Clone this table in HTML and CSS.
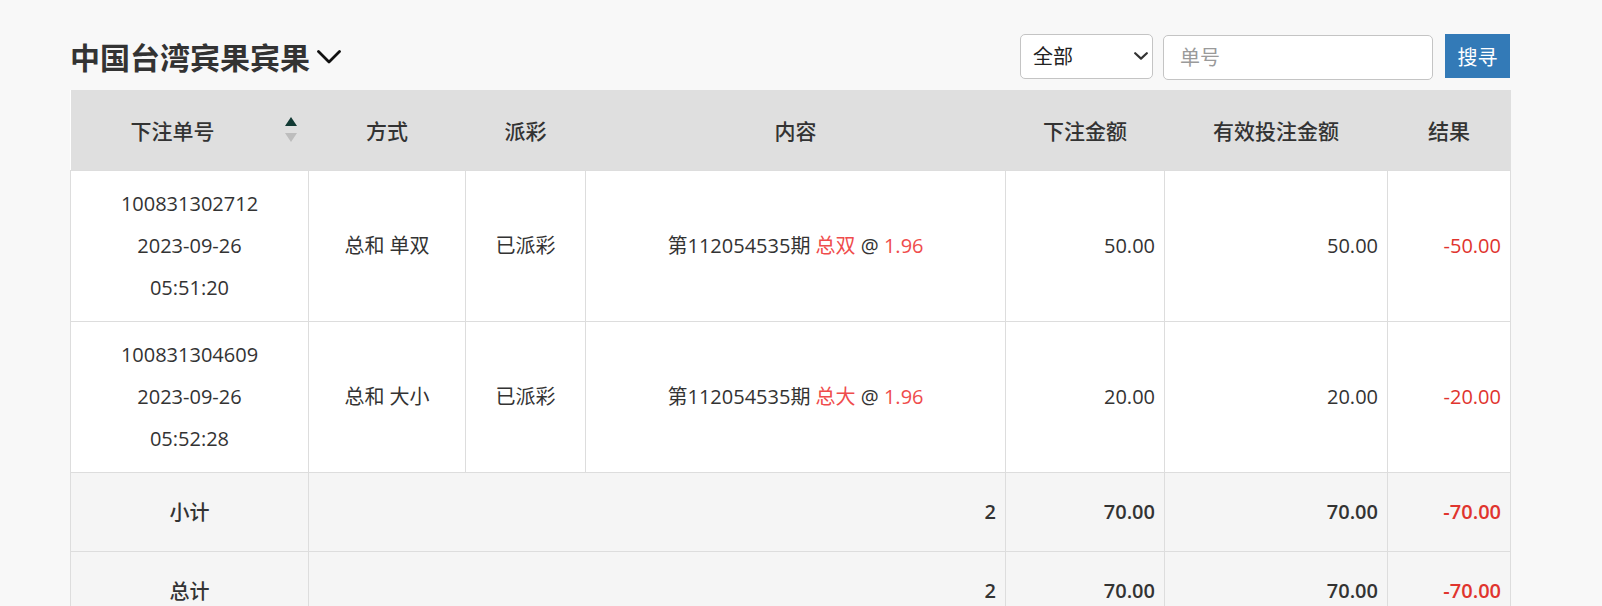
FILE: index.html
```html
<!DOCTYPE html>
<html lang="zh-CN">
<head>
<meta charset="utf-8">
<title>中国台湾宾果宾果</title>
<link rel="stylesheet" href="styles.css">
</head>
<body>
<div class="page">
  <div class="toolbar">
    <h3 class="title">中国台湾宾果宾果<svg class="title-caret" width="24" height="14" viewBox="0 0 24 14"><path d="M1.5 1.5 L12 12 L22.5 1.5" fill="none" stroke="#111" stroke-width="2.8" stroke-linecap="round" stroke-linejoin="round"/></svg></h3>
    <div class="filters">
      <div class="select-wrap">
        <select class="select">
          <option>全部</option>
        </select>
        <svg class="select-caret" width="14" height="8" viewBox="0 0 14 8"><path d="M1.2 1.2 L7 6.6 L12.8 1.2" fill="none" stroke="#333" stroke-width="2.2" stroke-linecap="round" stroke-linejoin="round"/></svg>
      </div>
      <input class="search-input" type="text" placeholder="单号">
      <button class="btn-search">搜寻</button>
    </div>
  </div>

  <table class="bets">
    <colgroup>
      <col class="c-id"><col class="c-way"><col class="c-pay"><col class="c-content"><col class="c-amount"><col class="c-valid"><col class="c-result">
    </colgroup>
    <thead>
      <tr>
        <th class="th-sort">下注单号
          <span class="sort-icon">
            <svg width="12" height="26" viewBox="0 0 12 26"><path d="M6 0 L12 9 L0 9 Z" fill="#123a34"/><path d="M0 16 L12 16 L6 25 Z" fill="#bdbdbd"/></svg>
          </span>
        </th>
        <th>方式</th>
        <th>派彩</th>
        <th>内容</th>
        <th>下注金额</th>
        <th>有效投注金额</th>
        <th>结果</th>
      </tr>
    </thead>
    <tbody>
      <tr class="row">
        <td class="center multi">100831302712<br>2023-09-26<br>05:51:20</td>
        <td class="center">总和 单双</td>
        <td class="center">已派彩</td>
        <td class="center">第112054535期 <span class="hl">总双</span> @ <span class="hl">1.96</span></td>
        <td class="num">50.00</td>
        <td class="num">50.00</td>
        <td class="num neg">-50.00</td>
      </tr>
      <tr class="row">
        <td class="center multi">100831304609<br>2023-09-26<br>05:52:28</td>
        <td class="center">总和 大小</td>
        <td class="center">已派彩</td>
        <td class="center">第112054535期 <span class="hl">总大</span> @ <span class="hl">1.96</span></td>
        <td class="num">20.00</td>
        <td class="num">20.00</td>
        <td class="num neg">-20.00</td>
      </tr>
      <tr class="sum">
        <td class="center">小计</td>
        <td class="num" colspan="3">2</td>
        <td class="num">70.00</td>
        <td class="num">70.00</td>
        <td class="num neg">-70.00</td>
      </tr>
      <tr class="sum">
        <td class="center">总计</td>
        <td class="num" colspan="3">2</td>
        <td class="num">70.00</td>
        <td class="num">70.00</td>
        <td class="num neg">-70.00</td>
      </tr>
    </tbody>
  </table>
</div>
</body>
</html>
```

FILE: styles.css
```css
* {
  box-sizing: border-box;
}

html, body {
  margin: 0;
  padding: 0;
  background: #f8f8f8;
}

body {
  font-family: "Open Sans", "Noto Sans CJK SC", sans-serif;
  font-size: 20px;
  color: #333;
}

.page {
  width: 1440px;
  margin-left: 70px;
  padding-top: 30px;
}

.toolbar {
  display: flex;
  align-items: center;
  justify-content: space-between;
  height: 52px;
  margin-bottom: 8px;
}

.title {
  margin: 0;
  display: flex;
  align-items: center;
  font-family: "Noto Sans CJK SC", sans-serif;
  font-size: 30px;
  font-weight: 700;
  color: #333;
  line-height: 1;
  letter-spacing: 0;
}

.title-caret {
  margin-left: 7px;
  margin-top: 2px;
}

.filters {
  display: flex;
  align-items: center;
}

.select-wrap {
  position: relative;
  width: 133px;
  height: 45px;
  margin-right: 10px;
}

.select {
  appearance: none;
  -webkit-appearance: none;
  width: 100%;
  height: 100%;
  border: 1px solid #c4c4c4;
  border-radius: 5px;
  background: #fff;
  padding: 0 30px 0 12px;
  font-family: "Open Sans", "Noto Sans CJK SC", sans-serif;
  font-size: 20px;
  color: #222;
}

.select-caret {
  position: absolute;
  right: 5px;
  top: 18px;
  pointer-events: none;
}

.search-input {
  width: 270px;
  height: 45px;
  margin-top: 2px;
  border: 1px solid #c4c4c4;
  border-radius: 5px;
  background: #fff;
  padding: 0 16px;
  font-family: "Open Sans", "Noto Sans CJK SC", sans-serif;
  font-size: 20px;
  color: #333;
}

.search-input::placeholder {
  color: #9a9a9a;
}

.btn-search {
  width: 65px;
  height: 44px;
  margin-left: 12px;
  border: none;
  border-radius: 0;
  background: #337ab7;
  color: #fff;
  font-family: "Noto Sans CJK SC", sans-serif;
  font-size: 20px;
  padding: 0;
}

.bets {
  width: 1440px;
  table-layout: fixed;
  border-collapse: collapse;
  background: #fff;
}

.c-id { width: 238px; }
.c-way { width: 157px; }
.c-pay { width: 120px; }
.c-content { width: 420px; }
.c-amount { width: 159px; }
.c-valid { width: 223px; }
.c-result { width: 123px; }

.bets thead tr {
  height: 80px;
  background: #dfdfdf;
}

.bets th {
  font-family: "Noto Sans CJK SC", sans-serif;
  font-weight: 500;
  font-size: 21px;
  color: #333;
  text-align: center;
  vertical-align: middle;
  padding: 0 8px;
  border: none;
}

.bets th.th-sort {
  position: relative;
  padding-left: 8px;
  padding-right: 42px;
}

.sort-icon {
  position: absolute;
  right: 12px;
  top: 27px;
  width: 12px;
  height: 26px;
  display: block;
}

.sort-icon svg {
  display: block;
}

.bets td {
  border: 1px solid #dddddd;
  padding: 0 9px;
  vertical-align: middle;
  font-size: 20px;
  color: #333;
}

.bets tr.row {
  height: 151px;
}

.bets tr.row td {
  line-height: 42px;
}

.center {
  text-align: center;
}

.num {
  text-align: right;
}

.hl {
  color: #ef4c4c;
}

.neg {
  color: #e0342e !important;
}

.bets tr.sum {
  height: 79px;
  background: #f5f5f5;
}

.bets tr.sum td {
  font-weight: 600;
  line-height: 28px;
}

.bets tr.sum td.center {
  font-family: "Noto Sans CJK SC", sans-serif;
  font-weight: 500;
}
```
